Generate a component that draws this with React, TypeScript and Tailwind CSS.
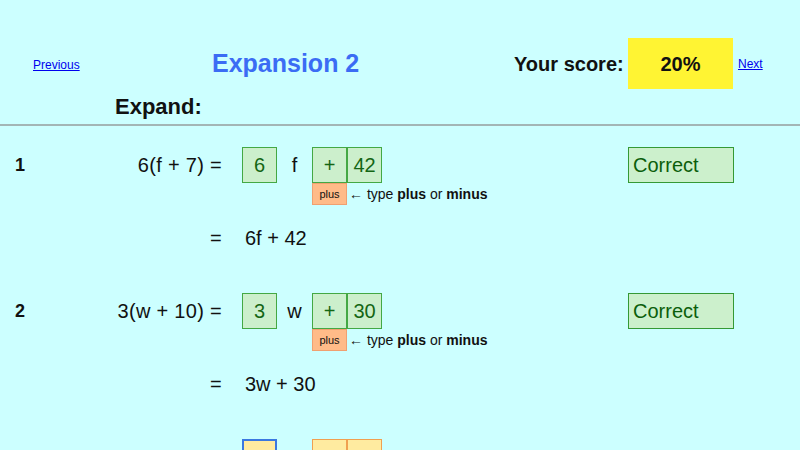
import React from "react";

const problems = [
  { n: "1", expr: "6(f + 7) =", a: "6", v: "f", sign: "+", b: "42", ans: "6f + 42", done: true },
  { n: "2", expr: "3(w + 10) =", a: "3", v: "w", sign: "+", b: "30", ans: "3w + 30", done: true },
  { n: "3", expr: "", a: "", v: "", sign: "", b: "", ans: "", done: false },
];

function Box({ children, kind }: { children?: React.ReactNode; kind: string }) {
  const cls =
    kind === "ok"
      ? "bg-[#ccefcc] border-[#44a844] text-[#146614]"
      : kind === "active"
      ? "bg-[#ffeba0] border-2 border-[#3a78e0]"
      : "bg-[#ffeba0] border-[#f0a050]";
  return (
    <div className={`w-[35px] h-[36px] border flex items-center justify-center text-[20px] ${cls}`}>
      {children}
    </div>
  );
}

export default function App() {
  return (
    <main
      className="w-[800px] h-[450px] overflow-hidden bg-[#ccffff] text-[#111]"
      style={{ fontFamily: '"Liberation Sans", Arial, sans-serif' }}
    >
      {/* Header */}
      <div className="border-b-2 border-[#a3b5b5] h-[126px] pt-[38px]">
        <div className="flex items-center h-[51px]">
          <div className="w-[212px] pl-[33px]">
            <a href="#" className="text-[12px] text-[#0000ee] underline">Previous</a>
          </div>
          <div className="w-[302px] text-[25px] font-bold text-[#3b6cf4]">Expansion 2</div>
          <div className="w-[114px] text-[20px] font-bold">Your score:</div>
          <div className="w-[105px] h-[51px] bg-[#fff433] flex items-center justify-center text-[20px] font-bold">
            20%
          </div>
          <a href="#" className="ml-[5px] text-[12px] text-[#0000ee] underline">Next</a>
        </div>
        <div className="pl-[115px] mt-[5px] text-[22px] font-bold leading-[26px]">Expand:</div>
      </div>

      {/* Problems */}
      {problems.map((p) => (
        <div key={p.n} className="pt-[21px] pb-[22px]">
          <div className="flex items-center h-[36px]">
            <div className="w-[100px] pl-[15px] text-[18px] font-bold">{p.done ? p.n : ""}</div>
            <div className="w-[122px] text-right text-[20px] tracking-[0.3px]">{p.expr}</div>
            <div className="w-[20px]" />
            <div className="w-[386px] flex items-center">
              <Box kind={p.done ? "ok" : "active"}>{p.a}</Box>
              <div className="w-[35px] text-center text-[20px]">{p.v}</div>
              <Box kind={p.done ? "ok" : "pending"}>{p.sign}</Box>
              <Box kind={p.done ? "ok" : "pending"}>{p.b}</Box>
            </div>
            {p.done && (
              <div className="w-[106px] h-[36px] border border-[#359935] bg-[#ccf0cc] text-[#0b5e0b] text-[20px] pl-[4px] flex items-center">
                Correct
              </div>
            )}
          </div>
          {p.done && (
            <>
              <div className="flex items-center h-[22px]">
                <div className="w-[312px]" />
                <div className="w-[35px] h-[22px] bg-[#ffbb88] border border-[#f0a070] text-[11px] flex items-center justify-center">
                  plus
                </div>
                <div className="ml-[2px] text-[14px]">
                  ← type <b>plus</b> or <b>minus</b>
                </div>
              </div>
              <div className="flex items-center h-[24px] mt-[21px] text-[20px]">
                <div className="w-[210px]" />
                <div className="w-[35px]">=</div>
                <div>{p.ans}</div>
              </div>
            </>
          )}
        </div>
      ))}
    </main>
  );
}
